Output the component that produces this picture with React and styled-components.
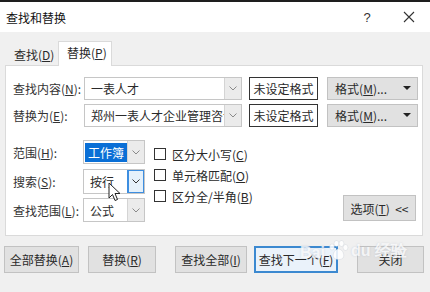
import React from "react";
import styled, { createGlobalStyle } from "styled-components";

const GlobalStyle = createGlobalStyle`
  html, body { margin: 0; padding: 0; }
  body {
    width: 430px;
    height: 292px;
    overflow: hidden;
    background: #f0f0f0;
    font-family: "Noto Sans CJK SC", "Noto Sans", sans-serif;
    font-size: 12px;
    color: #2a2a2a;
  }
`;

const Dialog = styled.div`
  position: relative;
  width: 430px;
  height: 292px;
  background: #f0f0f0;
  border-top: 2px solid #1e1e1e;
  box-sizing: border-box;
`;

const TitleBar = styled.div`
  height: 30px;
  background: #fff;
  display: flex;
  align-items: center;
  padding: 0 0 0 6px;
  font-size: 12px;
  color: #111;
`;

const Title = styled.div`
  flex: 1;
`;

const TitleBtn = styled.div`
  width: 42px;
  display: flex;
  justify-content: center;
  font-size: 13px;
  color: #333;
  font-family: "Liberation Sans", sans-serif;
`;

const Tabs = styled.div`
  display: flex;
  align-items: flex-end;
  padding: 8px 0 0 5px;
  height: 25px;
`;

const Tab = styled.div`
  width: ${(p) => p.$w}px;
  height: ${(p) => (p.$active ? 25 : 22)}px;
  line-height: 22px;
  box-sizing: border-box;
  padding-left: 8px;
  background: ${(p) => (p.$active ? "#fff" : "transparent")};
  border: 1px solid ${(p) => (p.$active ? "#dadada" : "transparent")};
  border-bottom: none;
  margin-bottom: ${(p) => (p.$active ? -1 : 0)}px;
  position: relative;
  z-index: 1;
`;

const Panel = styled.div`
  margin: 0 7px 0 5px;
  height: 171px;
  background: #fff;
  border: 1px solid #dadada;
  box-sizing: border-box;
  padding: 10px 6px 0 7px;
`;

const Row = styled.div`
  display: flex;
  align-items: center;
  height: 24px;
  margin-bottom: ${(p) => p.$mb || 0}px;
`;

const Label = styled.div`
  width: ${(p) => p.$w || 71}px;
  flex: none;
  color: #333;
  padding-top: 1px;
`;

const Combo = styled.div`
  display: flex;
  width: ${(p) => p.$w}px;
  height: ${(p) => p.$h || 24}px;
  box-sizing: border-box;
  border: 1px solid #c6c6c6;
  background: #fff;
  flex: none;
`;

const ComboText = styled.div`
  flex: 1;
  display: flex;
  align-items: center;
  padding-left: ${(p) => p.$pl ?? 6}px;
  white-space: nowrap;
  overflow: hidden;
`;

const Selected = styled.span`
  background: #0a6fd6;
  color: #fff;
  padding: 1px 5px 1px 3px;
  line-height: 17px;
`;

const Arrow = styled.div`
  width: 16px;
  flex: none;
  display: flex;
  align-items: center;
  justify-content: center;
  background: ${(p) => (p.$hot ? "#e5f1fb" : "#ebebeb")};
  border-left: 1px solid ${(p) => (p.$hot ? "#3d8ee0" : "#d4d4d4")};
  box-shadow: ${(p) => (p.$hot ? "inset 0 0 0 1px #3d8ee0" : "none")};
`;

const FormatBox = styled.div`
  width: 69px;
  height: 23px;
  margin-left: 7px;
  box-sizing: border-box;
  border: 1px solid #333;
  background: #fff;
  display: flex;
  align-items: center;
  justify-content: center;
  flex: none;
`;

const Button = styled.div`
  width: ${(p) => p.$w}px;
  height: ${(p) => p.$h || 27}px;
  margin-left: ${(p) => p.$ml || 0}px;
  box-sizing: border-box;
  border: ${(p) => (p.$primary ? "2px solid #3c89d0" : "1px solid #c2c2c2")};
  background: ${(p) => (p.$primary ? "#eaf2fa" : "#e1e1e1")};
  display: flex;
  align-items: center;
  justify-content: center;
  flex: none;
  white-space: nowrap;
`;

const FormatBtn = styled(Button)`
  justify-content: flex-end;
  padding-right: 6px;
  gap: 16px;
`;

const Lower = styled.div`
  display: flex;
  margin-top: 13px;
`;

const LeftCol = styled.div`
  display: flex;
  flex-direction: column;
  gap: 5px;
`;

const Checks = styled.div`
  display: flex;
  flex-direction: column;
  gap: 7px;
  margin: 7px 0 0 9px;
  flex: 1;
`;

const Check = styled.div`
  display: flex;
  align-items: center;
  height: 14px;
`;

const Box = styled.span`
  width: 10px;
  height: 10px;
  border: 1px solid #333;
  background: #fff;
  margin-right: 6px;
  flex: none;
`;

const OptionsWrap = styled.div`
  display: flex;
  align-items: flex-end;
  padding-bottom: 1px;
`;

const Footer = styled.div`
  display: flex;
  padding: 10px 0 0 4px;
`;

const Cursor = styled.svg`
  position: absolute;
  left: 108px;
  top: 180px;
`;

const Watermark = styled.div`
  position: absolute;
  left: 300px;
  top: 238px;
  display: flex;
  align-items: flex-end;
  gap: 2px;
  color: rgba(255, 255, 255, 0.8);
  font-family: "Liberation Sans", sans-serif;
  font-size: 16px;
  font-weight: bold;
  text-shadow: 0 0 2px rgba(140, 150, 170, 0.35);
  pointer-events: none;
`;

const Chevron = ({ color = "#8a8a8a" }) => (
  <svg width="8" height="5" viewBox="0 0 8 5">
    <polyline points="0.5,0.5 4,4 7.5,0.5" fill="none" stroke={color} strokeWidth="1" />
  </svg>
);

const Tri = () => (
  <svg width="8" height="4" viewBox="0 0 8 4">
    <polygon points="0,0 8,0 4,4" fill="#222" />
  </svg>
);

const CloseX = () => (
  <svg width="12" height="12" viewBox="0 0 12 12">
    <path d="M1 1 L11 11 M11 1 L1 11" stroke="#333" strokeWidth="1.1" />
  </svg>
);

const Paw = () => (
  <svg width="22" height="22" viewBox="0 0 22 22">
    <g fill="rgba(255,255,255,0.85)" stroke="rgba(150,160,180,0.3)" strokeWidth="0.6">
      <ellipse cx="5" cy="7" rx="2.4" ry="3" />
      <ellipse cx="9.5" cy="3.5" rx="2.4" ry="3" />
      <ellipse cx="14.5" cy="3.5" rx="2.4" ry="3" />
      <ellipse cx="18.5" cy="7.5" rx="2.4" ry="3" />
      <path d="M11.5 9 C7 9 5 16 7 18 C9 20 14 20 16 18 C18 16 16 9 11.5 9 Z" />
    </g>
  </svg>
);

export default function App() {
  return (
    <Dialog>
      <GlobalStyle />
      <TitleBar>
        <Title>查找和替换</Title>
        <TitleBtn>?</TitleBtn>
        <TitleBtn><CloseX /></TitleBtn>
      </TitleBar>
      <Tabs>
        <Tab $w={53}>查找(<u>D</u>)</Tab>
        <Tab $w={54} $active>替换(<u>P</u>)</Tab>
      </Tabs>
      <Panel>
        <Row $mb={3}>
          <Label>查找内容(<u>N</u>):</Label>
          <Combo $w={158} $h={23}>
            <ComboText>一表人才</ComboText>
            <Arrow><Chevron /></Arrow>
          </Combo>
          <FormatBox>未设定格式</FormatBox>
          <FormatBtn $w={91} $h={23} $ml={9}>
            <span>格式(<u>M</u>)...</span>
            <Tri />
          </FormatBtn>
        </Row>
        <Row>
          <Label>替换为(<u>E</u>):</Label>
          <Combo $w={158} $h={23}>
            <ComboText>郑州一表人才企业管理咨询有限公司</ComboText>
            <Arrow><Chevron /></Arrow>
          </Combo>
          <FormatBox>未设定格式</FormatBox>
          <FormatBtn $w={91} $h={23} $ml={9}>
            <span>格式(<u>M</u>)...</span>
            <Tri />
          </FormatBtn>
        </Row>
        <Lower>
          <LeftCol>
            <Row>
              <Label $w={70}>范围(<u>H</u>):</Label>
              <Combo $w={62}>
                <ComboText $pl={1}><Selected>工作簿</Selected></ComboText>
                <Arrow><Chevron /></Arrow>
              </Combo>
            </Row>
            <Row>
              <Label $w={70}>搜索(<u>S</u>):</Label>
              <Combo $w={62} $h={25}>
                <ComboText>按行</ComboText>
                <Arrow $hot><Chevron color="#333" /></Arrow>
              </Combo>
            </Row>
            <Row>
              <Label $w={70}>查找范围(<u>L</u>):</Label>
              <Combo $w={62}>
                <ComboText>公式</ComboText>
                <Arrow><Chevron /></Arrow>
              </Combo>
            </Row>
          </LeftCol>
          <Checks>
            <Check><Box />区分大小写(<u>C</u>)</Check>
            <Check><Box />单元格匹配(<u>O</u>)</Check>
            <Check><Box />区分全/半角(<u>B</u>)</Check>
          </Checks>
          <OptionsWrap>
            <Button $w={73} $h={26}>选项(<u>T</u>)&nbsp;&nbsp;&lt;&lt;</Button>
          </OptionsWrap>
        </Lower>
      </Panel>
      <Footer>
        <Button $w={75}>全部替换(<u>A</u>)</Button>
        <Button $w={68} $ml={9}>替换(<u>R</u>)</Button>
        <Button $w={72} $ml={19}>查找全部(<u>I</u>)</Button>
        <Button $w={84} $ml={7} $primary>查找下一个(<u>F</u>)</Button>
        <Button $w={67} $ml={19}>关闭</Button>
      </Footer>
      <Watermark>
        <span>Bai</span>
        <Paw />
        <span>du 经验</span>
      </Watermark>
      <Cursor width="13" height="20" viewBox="0 0 13 20">
        <path d="M1 1 L1 16 L4.5 12.5 L7 18.5 L9.5 17.5 L7 11.5 L12 11.5 Z" fill="#fff" stroke="#222" strokeWidth="1" strokeLinejoin="round" />
      </Cursor>
    </Dialog>
  );
}
